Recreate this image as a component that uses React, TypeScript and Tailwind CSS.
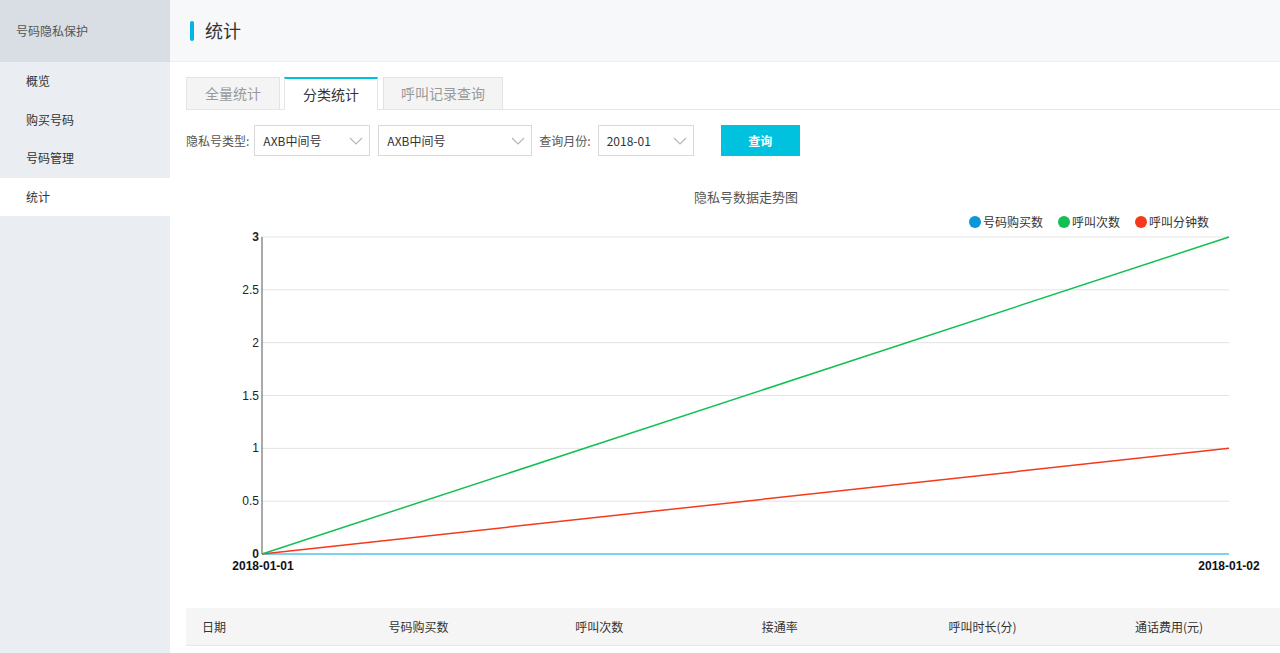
import React from 'react'

const cjk = '"Noto Sans CJK SC", "Liberation Sans", sans-serif'

const navItems = ['概览', '购买号码', '号码管理', '统计']
const tabs = ['全量统计', '分类统计', '呼叫记录查询']
const columns = ['日期', '号码购买数', '呼叫次数', '接通率', '呼叫时长(分)', '通话费用(元)']

function Chevron() {
  return (
    <svg width="14" height="8" viewBox="0 0 14 8" fill="none" className="shrink-0">
      <path d="M1 1l6 6 6-6" stroke="#b5b5b5" strokeWidth="1.1" />
    </svg>
  )
}

function Select({ value, width }: { value: string; width: string }) {
  return (
    <div className={`${width} h-[31px] border border-[#d9d9d9] bg-white flex items-center justify-between pl-[8px] pr-[6px] text-[12px] text-[#333]`}>
      <span>{value}</span>
      <Chevron />
    </div>
  )
}

function TrendChart() {
  // plot area in svg coords
  const x0 = 76
  const x1 = 1043
  const yTop = 57
  const yBottom = 374
  const ticks = [3, 2.5, 2, 1.5, 1, 0.5, 0]
  const yOf = (v: number) => yBottom - (v / 3) * (yBottom - yTop)

  return (
    <svg width="1094" height="420" className="block" style={{ fontFamily: '"Liberation Sans", "Noto Sans CJK SC", sans-serif' }}>
      <text x="560" y="22" textAnchor="middle" fontSize="13" fill="#555" style={{ fontFamily: cjk }}>
        隐私号数据走势图
      </text>

      <g fontSize="12" fill="#333" style={{ fontFamily: cjk }}>
        <circle cx="789" cy="42" r="6" fill="#0c95d8" />
        <text x="797" y="46.5">号码购买数</text>
        <circle cx="878" cy="42" r="6" fill="#13bf52" />
        <text x="886" y="46.5">呼叫次数</text>
        <circle cx="955" cy="42" r="6" fill="#f5391c" />
        <text x="963" y="46.5">呼叫分钟数</text>
      </g>

      {ticks.map((t) => (
        <g key={t}>
          {t !== 0 && <line x1={x0} x2={x1} y1={yOf(t)} y2={yOf(t)} stroke="#e3e3e3" strokeWidth="1" />}
          <text
            x={x0 - 3}
            y={yOf(t) + 4}
            textAnchor="end"
            fontSize="12"
            fill="#222"
            fontWeight={t === 3 || t === 0 ? 700 : 400}
          >
            {t}
          </text>
        </g>
      ))}

      <line x1={x0} x2={x0} y1={yTop} y2={yBottom} stroke="#555" strokeWidth="1" />

      <line x1={x0} y1={yBottom} x2={x1} y2={yOf(0)} stroke="#4fc3e8" strokeWidth="1.5" />
      <line x1={x0} y1={yBottom} x2={x1} y2={yOf(1)} stroke="#f5391c" strokeWidth="1.5" />
      <line x1={x0} y1={yBottom} x2={x1} y2={yOf(3)} stroke="#13bf52" strokeWidth="1.5" />

      <text x={x0 + 1} y="390" textAnchor="middle" fontSize="12" fontWeight="700" fill="#111">
        2018-01-01
      </text>
      <text x={x1} y="390" textAnchor="middle" fontSize="12" fontWeight="700" fill="#111">
        2018-01-02
      </text>
    </svg>
  )
}

export default function App() {
  return (
    <div className="flex w-[1280px] h-[653px] overflow-hidden bg-white" style={{ fontFamily: cjk }}>
      {/* sidebar */}
      <aside className="w-[170px] shrink-0 bg-[#eaedf1] flex flex-col">
        <div className="h-[62px] bg-[#d9dee4] flex items-center pl-[16px] text-[12px] text-[#555]">号码隐私保护</div>
        <nav className="flex flex-col">
          {navItems.map((item) => (
            <div
              key={item}
              className={`h-[38.5px] flex items-center pl-[26px] text-[12px] text-[#333] ${item === '统计' ? 'bg-white' : ''}`}
            >
              {item}
            </div>
          ))}
        </nav>
      </aside>

      {/* main */}
      <main className="flex-1 min-w-0 flex flex-col">
        <header className="h-[62px] shrink-0 bg-[#f7f8fa] border-b border-[#eceef1] flex items-center pl-[20px]">
          <span className="w-[4px] h-[20px] rounded-sm bg-[#00b4e5]" />
          <span className="ml-[11px] text-[18px] text-[#333]">统计</span>
        </header>

        <div className="pl-[16px] pt-[15px] flex flex-col">
          {/* tabs */}
          <div className="flex items-end h-[33px] border-b border-[#e5e5e5]">
            {tabs.map((tab, i) => (
              <div
                key={tab}
                className={
                  i === 1
                    ? 'h-[33px] w-[94px] mr-[5px] -mb-px bg-white border-t-2 border-t-[#00c1de] border-x border-x-[#e5e5e5] flex items-center justify-center text-[14px] text-[#333]'
                    : `h-[32px] ${i === 0 ? 'w-[94px] mr-[4px]' : 'w-[120px]'} bg-[#f4f4f4] border border-[#e3e3e3] border-b-0 flex items-center justify-center text-[14px] text-[#999]`
                }
              >
                {tab}
              </div>
            ))}
          </div>

          {/* filters */}
          <div className="flex items-center mt-[15px] h-[31px] text-[12px] text-[#555]">
            <span className="mr-[5px]">隐私号类型:</span>
            <Select value="AXB中间号" width="w-[116px]" />
            <div className="w-[8px]" />
            <Select value="AXB中间号" width="w-[154px]" />
            <span className="ml-[7px] mr-[7px]">查询月份:</span>
            <Select value="2018-01" width="w-[96px]" />
            <button className="ml-[27px] w-[79px] h-[31px] bg-[#00c1de] text-white text-[12px] font-bold">查询</button>
          </div>

          {/* chart */}
          <div className="mt-[24px]">
            <TrendChart />
          </div>

          {/* table header */}
          <div className="mt-[8px] h-[38px] bg-[#f5f5f5] border-b border-[#e8e8e8] grid grid-cols-[repeat(6,186.6px)] items-center text-[12px] text-[#333]">
            {columns.map((c) => (
              <div key={c} className="pl-[16px]">
                {c}
              </div>
            ))}
          </div>
        </div>
      </main>
    </div>
  )
}
